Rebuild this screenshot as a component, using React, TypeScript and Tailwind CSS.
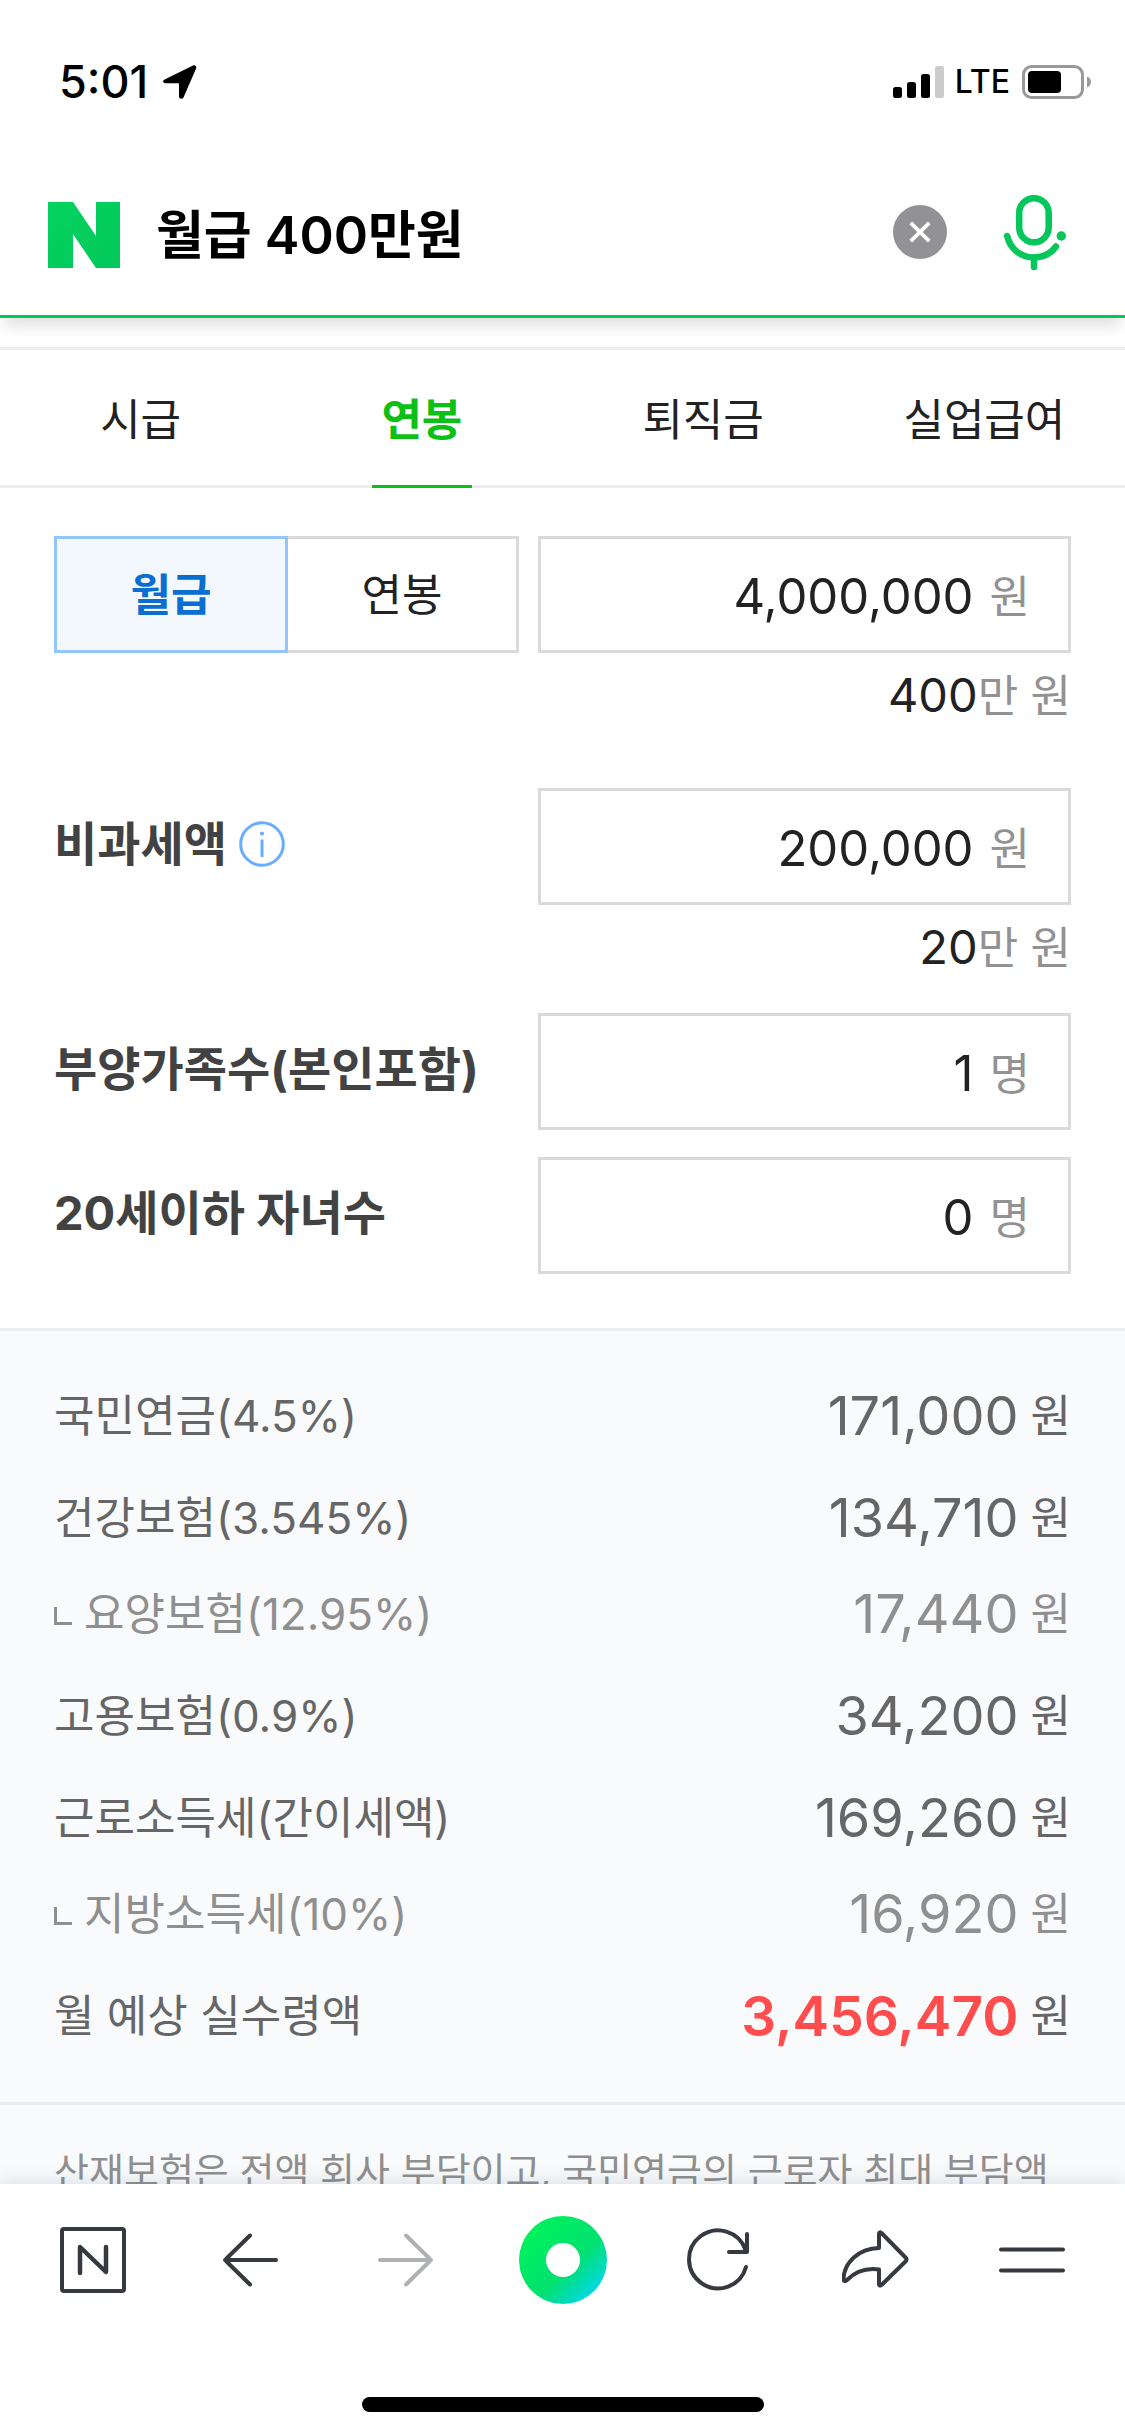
import { useState } from "react";
import type { ReactNode } from "react";

const tabs = ["시급", "연봉", "퇴직금", "실업급여"];

type Row = { label: string; value: string; sub?: boolean; total?: boolean };

const rows: Row[] = [
  { label: "국민연금(4.5%)", value: "171,000" },
  { label: "건강보험(3.545%)", value: "134,710" },
  { label: "요양보험(12.95%)", value: "17,440", sub: true },
  { label: "고용보험(0.9%)", value: "34,200" },
  { label: "근로소득세(간이세액)", value: "169,260" },
  { label: "지방소득세(10%)", value: "16,920", sub: true },
  { label: "월 예상 실수령액", value: "3,456,470", total: true },
];

function StatusBar() {
  return (
    <div className="flex h-[154px] items-center justify-between pt-[10px] pr-[33px] pl-[59px] text-black">
      <div className="flex items-center gap-3.5">
        <span className="text-[45px] leading-[60px] font-medium">5:01</span>
        <svg className="h-[36px] w-[36px]" viewBox="0 0 36 36" aria-hidden="true">
          <path
            d="M2.6 15.6 31 1.6c2.2-1 4 .8 3.1 3L21.6 33.200c-1 2.300-4.600 1.800-4.600-.8V20.300c0-.7-.4-1-1-1H3.600c-2.700 0-3.400-2.600-1-3.700z"
            fill="#000"
          />
        </svg>
      </div>
      <div className="flex items-center">
        <svg className="h-[34px] w-[52px]" viewBox="0 0 52 34" aria-hidden="true">
          <rect x="0" y="22" width="9" height="11" rx="2.500" />
          <rect x="14" y="17" width="9" height="16" rx="2.500" />
          <rect x="28" y="9" width="9" height="24" rx="2.500" />
          <rect x="42" y="1" width="9" height="32" rx="2.500" fill="#cbcbcb" />
        </svg>
        <span className="ml-2.5 text-[32px] leading-[60px] font-medium">LTE</span>
        <svg className="ml-3 h-[34px] w-[70px]" viewBox="0 0 70 34" aria-hidden="true">
          <rect x="1.500" y="1.500" width="59" height="31" rx="8" fill="none" stroke="#999" strokeWidth="3" />
          <rect x="6" y="6" width="33" height="22" rx="4" />
          <path d="M65 11.500c2.700 1.200 4 3.200 4 5.500s-1.300 4.300-4 5.500z" fill="#999" />
        </svg>
      </div>
    </div>
  );
}

function SearchBar() {
  const [query, setQuery] = useState("월급 400만원");
  return (
    <form
      className="flex h-[161px] items-center pr-[59px] pl-12"
      onSubmit={(e) => e.preventDefault()}
    >
      <a href="#home" aria-label="NAVER" className="shrink-0">
        <svg className="h-[66px] w-[72px]" viewBox="0 0 72 66" aria-hidden="true">
          <defs>
            <linearGradient id="logo" x1="0" y1="0" x2="1" y2="1">
              <stop offset="0" stopColor="#03d360" />
              <stop offset="1" stopColor="#03c75a" />
            </linearGradient>
          </defs>
          <path d="M0 0h25l23 34V0h24v66H48L25 32v34H0z" fill="url(#logo)" />
        </svg>
      </a>
      <input
        aria-label="검색어"
        value={query}
        onChange={(e) => setQuery(e.target.value)}
        className="ml-9 h-[76px] min-w-0 flex-1 bg-transparent pt-0.5 text-[52px] font-semibold text-black outline-none"
      />
      <button type="button" aria-label="지우기" className="mb-1.5 shrink-0" onClick={() => setQuery("")}>
        <svg className="h-[54px] w-[54px]" viewBox="0 0 54 54" aria-hidden="true">
          <circle cx="27" cy="27" r="27" fill="#929294" />
          <path d="M17.800 17.800 36.200 36.200M36.200 17.800 17.800 36.200" stroke="#fff" strokeWidth="3.800" />
        </svg>
      </button>
      <button type="button" aria-label="음성 검색" className="mb-1 ml-[57px] shrink-0">
        <svg
          className="h-[76px] w-[62px]"
          viewBox="0 0 62 76"
          fill="none"
          stroke="#03c75a"
          strokeWidth="6.500"
          strokeLinecap="round"
          aria-hidden="true"
        >
          <rect x="15.200" y="3.250" width="29.500" height="44" rx="14.750" />
          <path d="M3.200 41c2.800 12.500 13.300 21.500 26.800 21.500 9 0 17-4.300 22-11" />
          <path d="M30 63v9" />
          <circle cx="57.300" cy="41" r="4.700" fill="#03c75a" stroke="none" />
        </svg>
      </button>
    </form>
  );
}

function Field({
  id,
  label,
  initial,
  unit,
}: {
  id: string;
  label?: string;
  initial: string;
  unit: string;
}) {
  const [value, setValue] = useState(initial);
  return (
    <div className="flex h-[117px] min-w-0 items-center border-3 border-[#d9dadc] pt-1 pr-[38px] pl-6">
      <input
        id={id}
        aria-label={label}
        inputMode="numeric"
        value={value}
        onChange={(e) => setValue(e.target.value)}
        className="h-[72px] min-w-0 flex-1 bg-transparent text-right text-[49px] text-[#222] outline-none"
      />
      <span className="ml-4 text-[44px] leading-[72px] text-[#929292]">{unit}</span>
    </div>
  );
}

function Helper({ amount }: { amount: string }) {
  return (
    <p className="mt-3 text-right text-[44px] leading-[60px] text-[#929292]">
      <span className="text-[47px] text-[#222]">{amount}</span>만 원
    </p>
  );
}

function FieldRow({ children }: { children: ReactNode }) {
  return (
    <div className="grid grid-cols-[minmax(0,465fr)_minmax(0,533fr)] items-center gap-[19px]">
      {children}
    </div>
  );
}

const labelStyle = "text-[47px] leading-[72px] font-bold text-[#424242]";

function CalculatorForm() {
  const [mode, setMode] = useState("월급");
  const on = "border-3 border-[#92c5fa] bg-[#f3f8ff] font-bold text-[#0a6ed1]";
  const off = "border-3 border-[#d9dadc] bg-white text-[#222]";
  return (
    <section className="px-[54px] pt-12 pb-[54px]">
      <FieldRow>
        <div className="flex h-[117px] text-[44px]" role="group" aria-label="급여 기준">
          <button
            type="button"
            aria-pressed={mode === "월급"}
            onClick={() => setMode("월급")}
            className={`relative z-10 -mr-[3px] flex-1 ${mode === "월급" ? on : off}`}
          >
            월급
          </button>
          <button
            type="button"
            aria-pressed={mode === "연봉"}
            onClick={() => setMode("연봉")}
            className={`flex-1 ${mode === "연봉" ? on : off}`}
          >
            연봉
          </button>
        </div>
        <Field id="salary" label="급여" initial="4,000,000" unit="원" />
      </FieldRow>
      <Helper amount="400" />

      <div className="mt-[62px]">
        <FieldRow>
          <div className="flex items-center gap-3 pb-1.5">
            <label htmlFor="taxfree" className={labelStyle}>
              비과세액
            </label>
            <button type="button" aria-label="비과세액 안내">
              <svg className="h-[46px] w-[46px]" viewBox="0 0 46 46" fill="none" aria-hidden="true">
                <circle cx="23" cy="23" r="21.300" stroke="#68adff" strokeWidth="3" />
                <path d="M23 18.500v17.500" stroke="#68adff" strokeWidth="3" />
                <circle cx="23" cy="12.500" r="2.100" fill="#68adff" />
              </svg>
            </button>
          </div>
          <Field id="taxfree" initial="200,000" unit="원" />
        </FieldRow>
        <Helper amount="20" />
      </div>

      <div className="mt-[35px] flex flex-col gap-[27px]">
        <FieldRow>
          <label htmlFor="family" className={`pb-1.5 ${labelStyle}`}>
            부양가족수(본인포함)
          </label>
          <Field id="family" initial="1" unit="명" />
        </FieldRow>
        <FieldRow>
          <label htmlFor="children" className={`pb-1.5 ${labelStyle}`}>
            20세이하 자녀수
          </label>
          <Field id="children" initial="0" unit="명" />
        </FieldRow>
      </div>
    </section>
  );
}

function Results() {
  return (
    <section className="flex-1 border-t-3 border-[#ebeef1] bg-[#f9fafc]">
      <dl className="px-[54px] pt-[19px] pb-[50px] text-[44px] leading-[72px]">
        {rows.map((row) => (
          <div
            key={row.label}
            className={`flex items-end justify-between ${row.sub ? "h-24 text-[#8f8f8f]" : "h-[102px] text-[#666]"}`}
          >
            <dt className="flex items-center gap-3">
              {row.sub && <span className="mt-1 h-[18px] w-[18px] border-b-3 border-l-3 border-[#8f8f8f]" />}
              {row.label}
            </dt>
            <dd className="flex items-center gap-3">
              <span className={row.total ? "text-[55px] font-semibold text-[#ff4d4d]" : "text-[54px]"}>
                {row.value}
              </span>
              <span>원</span>
            </dd>
          </div>
        ))}
      </dl>
      <p className="border-t-3 border-[#ebedf0] px-[54px] pt-9 text-[38px] leading-[60px] whitespace-nowrap text-[#8f8f8f]">
        산재보험은 전액 회사 부담이고, 국민연금의 근로자 최대 부담액
      </p>
    </section>
  );
}

function NavButton({ label, children }: { label: string; children: ReactNode }) {
  return (
    <button type="button" aria-label={label} className="flex w-[66px] items-center justify-center">
      <svg
        className="h-[66px] w-[68px] shrink-0"
        viewBox="0 0 68 66"
        fill="none"
        stroke="#36393f"
        strokeWidth="4"
        strokeLinecap="round"
        strokeLinejoin="round"
        aria-hidden="true"
      >
        {children}
      </svg>
    </button>
  );
}

function BottomBar() {
  return (
    <footer className="relative z-10 shrink-0 bg-white shadow-[0_-1px_18px_rgba(60,90,110,0.18)]">
      <nav className="flex h-[151px] items-center justify-between px-[60px]">
        <NavButton label="홈">
          <rect x="3" y="2" width="62" height="62" rx="2" />
          <path d="M21 46V20L47 45V20" strokeWidth="4.500" />
        </NavButton>
        <NavButton label="뒤로">
          <path d="M60 33H9M34 8.500 10.500 31.500q-1.500 1.500 0 3L34 57.500" />
        </NavButton>
        <NavButton label="앞으로">
          <path d="M8 33h51M34 8.500l23.500 23q1.500 1.500 0 3L34 57.500" stroke="#b0b1b3" />
        </NavButton>
        <button type="button" aria-label="그린닷" className="flex w-[66px] items-center justify-center">
          <span className="flex size-[88px] shrink-0 items-center justify-center rounded-full bg-[linear-gradient(135deg,#00f35c_12%,#00e070_58%,#00d8ee_88%)]">
            <span className="size-[34px] rounded-full bg-white" />
          </span>
        </button>
        <NavButton label="새로고침">
          <path d="M61 40A29 29 0 1 1 60.500 23" />
          <path d="M62 7v18H44" />
        </NavButton>
        <NavButton label="공유">
          <path d="M37 6.500q.5-2 2.500-.5L64 31q1 1.500 0 3L39.500 58q-2 1.500-2.500-.5V42.500C23 40.500 13 45 5 53c-2 2-3.500 1-3.500-1C2 36 16 21.500 37 21z" />
        </NavButton>
        <NavButton label="메뉴">
          <path d="M3 22.500h62M3 43.500h62" />
        </NavButton>
      </nav>
      <div className="flex justify-center pt-[62px] pb-6">
        <div className="h-[15px] w-[402px] rounded-full bg-black" />
      </div>
    </footer>
  );
}

export default function App() {
  const [tab, setTab] = useState("연봉");
  return (
    <div className="flex h-screen flex-col bg-white font-['Inter','Noto_Sans_CJK_KR',sans-serif]">
      <header className="relative z-10 shrink-0 border-b-3 border-[#03c75a] bg-white shadow-[0_12px_14px_-4px_rgba(0,0,0,0.12)]">
        <StatusBar />
        <SearchBar />
      </header>
      <main className="flex min-h-0 flex-1 flex-col overflow-hidden pt-[29px]">
        <div role="tablist" className="grid h-[141px] shrink-0 grid-cols-4 border-y-3 border-[#ebeef1]">
          {tabs.map((name) => (
            <button
              key={name}
              type="button"
              role="tab"
              aria-selected={tab === name}
              onClick={() => setTab(name)}
              className={`relative pt-1 text-[44px] ${tab === name ? "font-bold text-[#0cc016]" : "text-[#222]"}`}
            >
              {name}
              {tab === name && (
                <span className="absolute -bottom-[3px] left-1/2 h-[3px] w-[100px] -translate-x-1/2 bg-[#0cc016]" />
              )}
            </button>
          ))}
        </div>
        <CalculatorForm />
        <Results />
      </main>
      <BottomBar />
    </div>
  );
}
